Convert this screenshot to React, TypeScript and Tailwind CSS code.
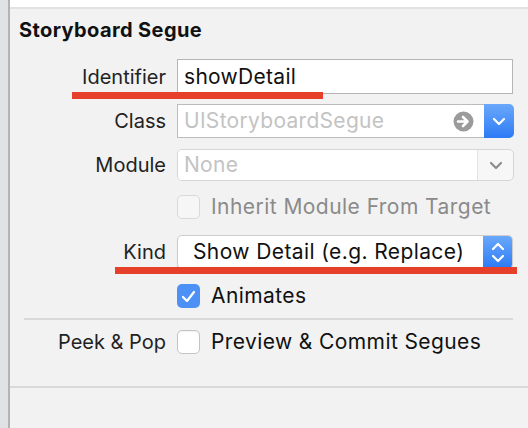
import React from 'react';

const font = { fontFamily: 'Inter, "Liberation Sans", sans-serif' };

const Chevron: React.FC<{ className?: string; color?: string }> = ({ className, color = '#fff' }) => (
    <svg className={className} width="14" height="9" viewBox="0 0 14 9" fill="none">
        <path d="M2 2l5 5 5-5" stroke={color} strokeWidth="2.2" strokeLinecap="round" strokeLinejoin="round" />
    </svg>
);

const Check: React.FC<{ checked?: boolean; disabled?: boolean }> = ({ checked, disabled }) => {
    if (checked) {
        return (
            <div className="w-[23px] h-[24px] rounded-[5px] bg-[#4d91f7] flex items-center justify-center">
                <svg width="15" height="13" viewBox="0 0 15 13" fill="none">
                    <path d="M2 7l4 4 7-9" stroke="#fff" strokeWidth="2.2" strokeLinecap="round" strokeLinejoin="round" />
                </svg>
            </div>
        );
    }
    return (
        <div
            className={
                disabled
                    ? 'w-[23px] h-[24px] rounded-[5px] border border-[#d9d9d9] bg-[#f6f6f6]'
                    : 'w-[23px] h-[24px] rounded-[5px] border border-[#c4c4c4] bg-white shadow-[inset_0_1px_1px_rgba(0,0,0,0.05)]'
            }
        />
    );
};

const Label: React.FC<{ children: React.ReactNode }> = ({ children }) => (
    <div className="w-[156px] text-right text-[20px] text-[#222]">{children}</div>
);

const App: React.FC = () => {
    return (
        <div className="relative flex w-[528px] h-[428px] bg-[#f2f2f2] overflow-hidden" style={font}>
            <div className="w-[8px] bg-[#e1e2e6]" />
            <div className="w-[2px] bg-[#b3b3b3]" />
            <div className="flex-1 flex flex-col">
                <div className="h-[7px] bg-white" />
                <div className="h-[2px] bg-[#e2e2e2]" />

                <div className="pl-[9px] mt-[8px] text-[20px] font-bold tracking-[0.4px] text-[#111] leading-[26px]">Storyboard Segue</div>

                {/* Identifier */}
                <div className="flex items-center mt-[16px] h-[35px]">
                    <Label>Identifier</Label>
                    <div className="ml-[11px] w-[336px] h-[35px] bg-white border border-[#b5b5b5] flex items-center pl-[6px] text-[21px] tracking-[0.3px] text-[#111]">
                        showDetail
                    </div>
                </div>

                {/* Class */}
                <div className="flex items-center mt-[10px] h-[34px]">
                    <Label>Class</Label>
                    <div className="ml-[11px] w-[337px] h-[34px] flex">
                        <div className="flex-1 bg-white border border-[#bcbcbc] border-r-0 flex items-center pl-[6px] text-[21px] tracking-[0.3px] text-[#c3c3c3]">
                            <span className="flex-1">UIStoryboardSegue</span>
                            <svg className="mr-[10px]" width="21" height="21" viewBox="0 0 21 21">
                                <circle cx="10.5" cy="10.5" r="10" fill="#9b9b9b" />
                                <path d="M5 10.5h9M10 6l4.5 4.5L10 15" stroke="#fff" strokeWidth="2.6" fill="none" strokeLinecap="round" strokeLinejoin="round" />
                            </svg>
                        </div>
                        <div className="w-[30px] rounded-r-[5px] bg-gradient-to-b from-[#69a8fa] to-[#2c7af5] flex items-center justify-center">
                            <Chevron />
                        </div>
                    </div>
                </div>

                {/* Module */}
                <div className="flex items-center mt-[11px] h-[32px]">
                    <Label>Module</Label>
                    <div className="ml-[11px] w-[337px] h-[32px] flex rounded-[5px] border border-[#d6d6d6] bg-[#f7f7f7] overflow-hidden">
                        <div className="w-[300px] bg-white border-r border-[#e3e3e3] flex items-center pl-[6px] text-[21px] tracking-[0.3px] text-[#c3c3c3]">None</div>
                        <div className="flex-1 flex items-center justify-center">
                            <Chevron color="#8c8c8c" />
                        </div>
                    </div>
                </div>

                {/* Inherit */}
                <div className="flex items-center mt-[14px] h-[24px]">
                    <div className="w-[156px]" />
                    <div className="ml-[11px] flex items-center gap-[11px]">
                        <Check disabled />
                        <span className="text-[21px] tracking-[0.45px] text-[#8a8a8a]">Inherit Module From Target</span>
                    </div>
                </div>

                {/* Kind */}
                <div className="flex items-center mt-[16px] h-[34px]">
                    <Label>Kind</Label>
                    <div className="ml-[11px] w-[336px] h-[34px] flex rounded-[5px] bg-white border border-[#cdcdcd] shadow-[0_1px_1px_rgba(0,0,0,0.12)] overflow-hidden">
                        <div className="flex-1 flex items-center pl-[15px] text-[21px] tracking-[0.4px] text-[#111]">Show Detail (e.g. Replace)</div>
                        <div className="w-[29px] bg-gradient-to-b from-[#69a8fa] to-[#2c7af5] flex flex-col items-center justify-center gap-[3px]">
                            <Chevron className="rotate-180" />
                            <Chevron />
                        </div>
                    </div>
                </div>

                {/* Animates */}
                <div className="flex items-center mt-[15px] h-[24px]">
                    <div className="w-[156px]" />
                    <div className="ml-[11px] flex items-center gap-[11px]">
                        <Check checked />
                        <span className="text-[21px] tracking-[0.4px] text-[#111]">Animates</span>
                    </div>
                </div>

                <div className="ml-[14px] mr-[15px] mt-[10px] h-[2px] bg-[#d9d9d9]" />

                {/* Peek & Pop */}
                <div className="flex items-center mt-[10px] h-[24px]">
                    <Label>Peek &amp; Pop</Label>
                    <div className="ml-[11px] flex items-center gap-[11px]">
                        <Check />
                        <span className="text-[21px] tracking-[0.4px] text-[#111]">Preview &amp; Commit Segues</span>
                    </div>
                </div>

                <div className="mt-[32px] h-[2px] bg-[#d9d9d9]" />
            </div>

            {/* annotation underlines */}
            <div className="absolute left-[72px] top-[92px] w-[251px] h-[7px] bg-[#e6402a]" />
            <div className="absolute left-[115px] top-[267px] w-[402px] h-[7px] bg-[#e6402a]" />
        </div>
    );
};

export default App;
